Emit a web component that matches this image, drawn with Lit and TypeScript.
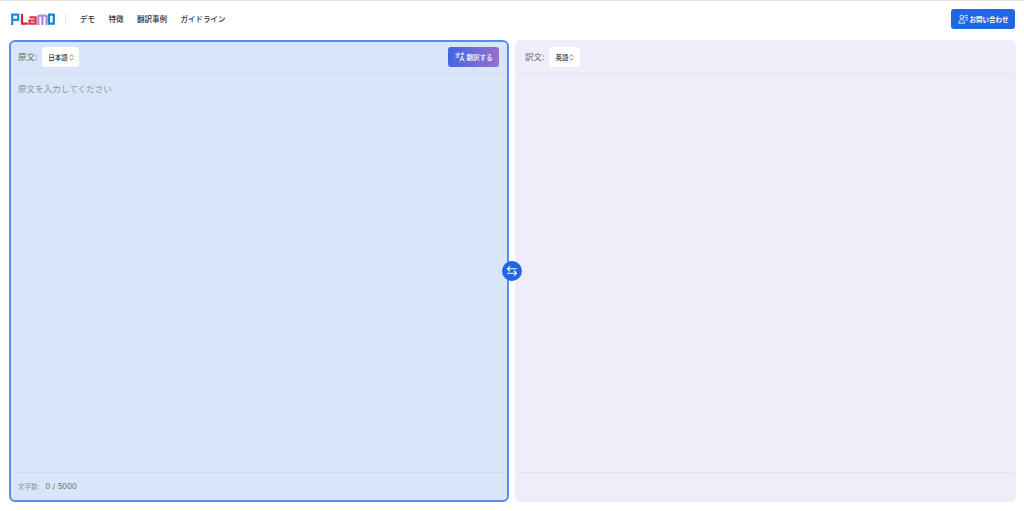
import { LitElement, html, css, svg } from "lit";
import { customElement } from "lit/decorators.js";

const updown = html`<svg class="ud" viewBox="0 0 6 9" width="5" height="7" fill="none" stroke="currentColor" stroke-width="0.9" stroke-linecap="round" stroke-linejoin="round"><path d="M1 3.2 3 1l2 2.2M1 5.8 3 8l2-2.2"/></svg>`;

@customElement("app-root")
export class AppRoot extends LitElement {
  static styles = css`
    :host { display: block; width: 1024px; height: 511px; overflow: hidden; background: #fff; font-family: Inter, "Noto Sans CJK JP", sans-serif; color: #1f2430; }
    .topline { height: 1px; background: #e6dedb; }
    header { height: 39px; box-sizing: border-box; display: flex; align-items: center; padding: 0 9px 3px 11px; }
    .logo { display: block; }
    .sep { width: 1px; height: 11px; background: #e2e4e8; margin: 0 14px 0 10px; }
    nav { display: flex; gap: 13.5px; font-size: 7.5px; font-weight: 500; color: #2b303a; line-height: 10px; padding-top: 1px; }
    .cta { margin-left: auto; height: 20px; width: 64px; box-sizing: border-box; border-radius: 3px; background: #2166e3; color: #fff; font-size: 6.5px; font-weight: 600; display: flex; align-items: center; justify-content: center; gap: 2px; }
    main { display: flex; gap: 6px; padding: 0 9px; height: 462px; position: relative; }
    .panel { flex: 1; min-width: 0; display: flex; flex-direction: column; border-radius: 6px; box-sizing: border-box; }
    .src { flex: 0 0 500px; background: #d9e5f9; border: 2px solid #5a8cf0; }
    .dst { flex: 0 0 501px; background: #eeedf9; border: 2px solid #eeedf9; }
    .head { height: 32px; box-sizing: border-box; border-bottom: 1px solid #cfdcf5; display: flex; align-items: center; padding: 0 8px 1px 7px; flex: none; }
    .dst .head { border-bottom-color: #e5e4f5; padding-left: 8px; }
    .label { font-size: 8.5px; color: #666b76; margin-right: 5px; line-height: 12px; }
    .sel { height: 20px; width: 37px; box-sizing: border-box; background: #fff; border-radius: 3px; display: flex; align-items: center; justify-content: center; gap: 1px; font-size: 6.5px; font-weight: 500; color: #1c1f27; }
    .dst .sel { width: 31px; }
    .ud { color: #555; }
    .go { margin-left: auto; width: 51px; height: 20px; border-radius: 3px; background: linear-gradient(100deg, #3d67e4, #9a6fd0); color: #fff; font-size: 6.5px; font-weight: 500; display: flex; align-items: center; justify-content: center; gap: 2px; box-sizing: border-box; }
    .body { flex: 1; padding: 9px 7px; font-size: 8.5px; line-height: 12px; color: #8b93a3; letter-spacing: 0.01em; }
    .foot { height: 28px; box-sizing: border-box; flex: none; border-top: 1px solid #cfdcf5; display: flex; align-items: center; padding: 0 8px 0 7px; }
    .dst .foot { border-top-color: #e5e4f5; }
    .count-l { font-size: 6.5px; line-height: 10px; color: #8b93a3; margin-right: 6px; }
    .count { font-size: 7.5px; line-height: 10px; color: #666b76; letter-spacing: 0.02em; }
    .swap { position: absolute; left: 502px; top: 221px; width: 20px; height: 20px; border-radius: 50%; background: #2166e3; display: flex; align-items: center; justify-content: center; }
  `;

  private logo() {
    const s = (d: string, c: string) => svg`<path d=${d} stroke=${c} stroke-width="2.2" fill="none" stroke-linejoin="miter"/>`;
    return html`<svg class="logo" width="44" height="12" viewBox="0 0 44 12">
      ${s("M1.2 12V1.6H7.2V6.8H1.2", "#1e8bdc")}
      ${s("M11 1V10.6H16.8", "#e4202a")}
      ${s("M18.5 4.4H24.6V10.6H18.5V7.5H24.6", "#e0324a")}
      ${s("M27.3 12V2.6M27.3 2.6H35.6M31.4 2.6V12M35.6 2.6V12", "#a98be0")}
      ${s("M38 1.6H42.8V10.6H38Z", "#1583d0")}
    </svg>`;
  }

  render() {
    return html`
      <div class="topline"></div>
      <header>
        ${this.logo()}
        <div class="sep"></div>
        <nav><span>デモ</span><span>特徴</span><span>翻訳事例</span><span>ガイドライン</span></nav>
        <div class="cta">
          <svg width="10" height="10" viewBox="0 0 12 12" fill="none" stroke="#fff" stroke-width="1" stroke-linecap="round"><circle cx="4.5" cy="3.5" r="2.2"/><path d="M1 10.5c0-2.4 1.6-3.6 3.5-3.6S8 8.1 8 10.5zM8.5 2h3M8.5 4.5h3M9.5 7h2"/></svg>
          <span>お問い合わせ</span>
        </div>
      </header>
      <main>
        <section class="panel src">
          <div class="head">
            <span class="label">原文:</span>
            <div class="sel">日本語 ${updown}</div>
            <div class="go">
              <svg width="10" height="10" viewBox="0 0 12 12" fill="none" stroke="#fff" stroke-width="1" stroke-linecap="round" stroke-linejoin="round"><path d="M1 2.5h5M3.5 1.2v1.3M5 2.5C4.6 4.6 3 6.2 1 7M2 4c.7 1.3 1.8 2.3 3 2.8M6 11l2.5-6L11 11M6.9 9.2h3.2M9 1l.4 1 1 .4-1 .4L9 3.8l-.4-1-1-.4 1-.4z"/></svg>
              <span>翻訳する</span>
            </div>
          </div>
          <div class="body">原文を入力してください</div>
          <div class="foot"><span class="count-l">文字数:</span><span class="count">0 / 5000</span></div>
        </section>
        <section class="panel dst">
          <div class="head">
            <span class="label">訳文:</span>
            <div class="sel">英語 ${updown}</div>
          </div>
          <div class="body"></div>
          <div class="foot"></div>
        </section>
        <div class="swap">
          <svg width="12" height="12" viewBox="0 0 12 12" fill="none" stroke="#fff" stroke-width="1.1" stroke-linecap="round" stroke-linejoin="round"><path d="M10.5 3.8H1.5M3.6 1.6 1.5 3.8 3.6 6M1.5 8.2h9M8.4 6l2.1 2.2-2.1 2.2"/></svg>
        </div>
      </main>
    `;
  }
}
